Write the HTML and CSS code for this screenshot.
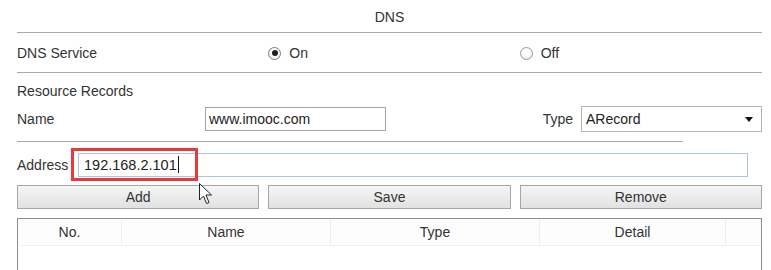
FILE: index.html
```html
<!DOCTYPE html>
<html lang="en">
<head>
    <meta charset="UTF-8">
    <title>DNS</title>
    <link rel="stylesheet" href="styles.css">
</head>
<body>
    <div class="panel">
        <div class="title">DNS</div>

        <div class="service-row">
            <span class="label">DNS Service</span>
            <label class="radio"><span class="dot checked"></span>On</label>
            <label class="radio"><span class="dot"></span>Off</label>
        </div>

        <div class="section-label">Resource Records</div>

        <div class="name-row">
            <span class="label name-label">Name</span>
            <div class="field name-field">www.imooc.com</div>
            <span class="label type-label">Type</span>
            <div class="select">
                <span>ARecord</span>
                <span class="arrow"></span>
            </div>
        </div>

        <div class="divider"></div>

        <div class="address-row">
            <span class="label address-label">Address</span>
            <div class="field address-field">192.168.2.101<span class="caret"></span></div>
            <div class="highlight"></div>
            <svg class="pointer" width="16" height="24" viewBox="0 0 16 24">
                <path d="M1.5 1.5 L1.5 18 L5.5 14 L8.5 21.5 L11 20.5 L8 13 L13.5 13 Z" fill="#fff" stroke="#222" stroke-width="1" stroke-linejoin="round"/>
            </svg>
        </div>

        <div class="actions">
            <button class="btn">Add</button>
            <button class="btn">Save</button>
            <button class="btn">Remove</button>
        </div>

        <div class="records">
            <div class="records-head">
                <div class="col col-no">No.</div>
                <div class="col col-name">Name</div>
                <div class="col col-type">Type</div>
                <div class="col col-detail">Detail</div>
                <div class="col col-extra"></div>
            </div>
            <div class="records-body"></div>
        </div>
    </div>
</body>
</html>
```

FILE: styles.css
```css
* {
    margin: 0;
    padding: 0;
    box-sizing: border-box;
}

body {
    width: 771px;
    height: 270px;
    overflow: hidden;
    background: white;
    font-family: 'Liberation Sans', Arial, sans-serif;
    font-size: 14px;
    color: #333;
}

.panel {
    padding: 0 9px 0 17px;
}

.title {
    height: 33px;
    padding-top: 2px;
    line-height: 30px;
    text-align: center;
    border-bottom: 1px solid #a9a9a9;
}

/* DNS Service */
.service-row {
    display: grid;
    grid-template-columns: repeat(3, 1fr);
    column-gap: 9px;
    align-items: center;
    height: 40px;
    padding-top: 1px;
    border-bottom: 1px solid #a9a9a9;
}

.radio {
    display: flex;
    align-items: center;
    gap: 8px;
}

.dot {
    width: 13px;
    height: 13px;
    border-radius: 50%;
    border: 1px solid #9a9a9a;
    background: radial-gradient(circle at 50% 40%, #ffffff 30%, #e4e4e4 100%);
    display: flex;
    align-items: center;
    justify-content: center;
}

.dot.checked {
    border-color: #7a7a7a;
}

.dot.checked::after {
    content: "";
    width: 6px;
    height: 6px;
    border-radius: 50%;
    background: #1e1e1e;
}

/* Resource Records */
.section-label {
    padding-top: 10px;
    line-height: 16px;
}

.name-row {
    display: flex;
    align-items: center;
    height: 24px;
    margin-top: 8px;
}

.name-label {
    width: 188px;
}

.field {
    height: 24px;
    line-height: 22px;
    padding-left: 3px;
    border: 1px solid #a3a3a3;
    background: white;
    color: #222;
}

.name-field {
    width: 181px;
}

.type-label {
    margin-left: auto;
    margin-right: 8px;
}

.select {
    width: 181px;
    height: 26px;
    border: 1px solid #b4b4b4;
    padding: 0 8px 0 4px;
    display: flex;
    align-items: center;
    justify-content: space-between;
    color: #222;
}

.arrow {
    width: 0;
    height: 0;
    border-left: 4px solid transparent;
    border-right: 4px solid transparent;
    border-top: 5px solid #111;
}

.divider {
    width: 666px;
    margin-top: 10px;
    border-top: 1px solid #a9a9a9;
}

/* Address */
.address-row {
    position: relative;
    display: flex;
    align-items: center;
    margin-top: 11px;
}

.address-label {
    width: 61px;
}

.address-field {
    width: 670px;
    padding-left: 5px;
    border-color: #a9c7e3;
    font-size: 14.5px;
}

.caret {
    display: inline-block;
    width: 1px;
    height: 17px;
    margin-left: 1px;
    vertical-align: -3px;
    background: #111;
}

.highlight {
    position: absolute;
    left: 54px;
    top: -5px;
    width: 127px;
    height: 33px;
    border: 3px solid #e8393b;
}

.pointer {
    position: absolute;
    left: 181px;
    top: 29px;
}

/* Buttons */
.actions {
    display: grid;
    grid-template-columns: repeat(3, 1fr);
    column-gap: 9px;
    margin-top: 8px;
}

.btn {
    height: 24px;
    border: 1px solid #a6a6a6;
    background: linear-gradient(#f6f6f6, #e1e1e1);
    font-family: inherit;
    font-size: 14px;
    color: #333;
    cursor: pointer;
}

/* Records table */
.records {
    margin-top: 9px;
    width: 745px;
    border: 1px solid #8e8e8e;
}

.records-head {
    display: flex;
    height: 27px;
    background: #fdfdfd;
    border-bottom: 1px solid #f0f0f0;
}

.col {
    line-height: 26px;
    text-align: center;
    border-right: 1px solid #eeeeee;
}

.col-no { width: 104px; }
.col-name { width: 209px; }
.col-type { width: 209px; }
.col-detail { width: 186px; }
.col-extra { flex: 1; border-right: none; }

.records-body {
    height: 30px;
}
```
